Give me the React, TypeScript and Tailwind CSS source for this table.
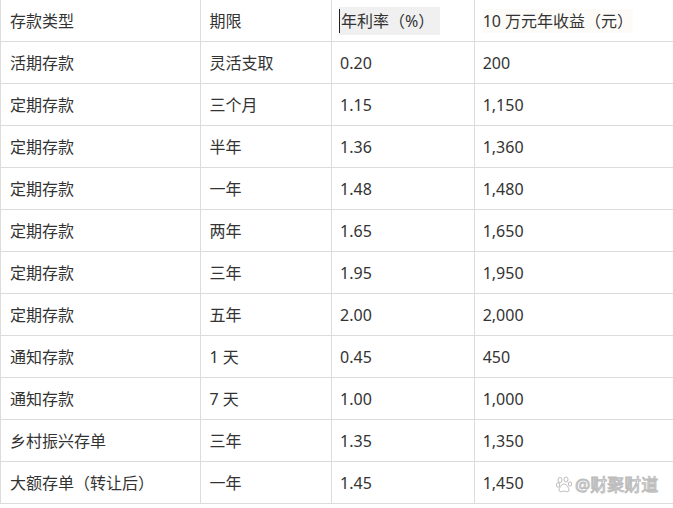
import React from 'react';

const rows: [string, string, string, string][] = [
  ['活期存款', '灵活支取', '0.20', '200'],
  ['定期存款', '三个月', '1.15', '1,150'],
  ['定期存款', '半年', '1.36', '1,360'],
  ['定期存款', '一年', '1.48', '1,480'],
  ['定期存款', '两年', '1.65', '1,650'],
  ['定期存款', '三年', '1.95', '1,950'],
  ['定期存款', '五年', '2.00', '2,000'],
  ['通知存款', '1 天', '0.45', '450'],
  ['通知存款', '7 天', '1.00', '1,000'],
  ['乡村振兴存单', '三年', '1.35', '1,350'],
  ['大额存单（转让后）', '一年', '1.45', '1,450'],
];

const cell = 'flex items-center border-r border-[#dcdcdc] h-full';

const App: React.FC = () => {
  return (
    <div
      className="relative w-[673px] h-[508px] bg-white overflow-hidden text-[16px] text-[#333]"
      style={{ fontFamily: '"Noto Sans", "Noto Sans CJK SC", sans-serif' }}
    >
      <div className="border-l border-[#dcdcdc] w-[700px]">
        <div className="flex h-[42px] border-b border-[#dcdcdc]">
          <div className={`${cell} w-[201px] pl-[9px]`}>存款类型</div>
          <div className={`${cell} w-[131px] pl-[8px]`}>期限</div>
          <div className={`${cell} w-[143px] pl-[7px]`}>
            <span className="flex items-center bg-[#f0f0f0] h-[28px] pr-[6px]">
              <span className="w-px h-[24px] bg-[#222] mr-[1px]" />
              年利率（%）
            </span>
          </div>
          <div className={`${cell} w-[226px] pl-[8px]`}>
            <span className="bg-[#fcfbf8]">10 万元年收益（元）</span>
          </div>
        </div>
        {rows.map((r, i) => (
          <div key={i} className="flex h-[42px] border-b border-[#dcdcdc]">
            <div className={`${cell} w-[201px] pl-[9px]`}>{r[0]}</div>
            <div className={`${cell} w-[131px] pl-[8px]`}>{r[1]}</div>
            <div className={`${cell} w-[143px] pl-[8px]`}>{r[2]}</div>
            <div className={`${cell} w-[226px] pl-[8px]`}>{r[3]}</div>
          </div>
        ))}
      </div>

      {/* watermark */}
      <div className="absolute left-[556px] top-[472px] flex items-center gap-[3px] text-[17px] text-white [-webkit-text-stroke:1px_#bdbdbd]">
        <svg width="16" height="17" viewBox="0 0 16 17" fill="white" stroke="#bdbdbd" strokeWidth="1">
          <ellipse cx="4" cy="4" rx="2" ry="2.6" />
          <ellipse cx="10" cy="3.5" rx="2" ry="2.6" />
          <ellipse cx="2" cy="9" rx="1.7" ry="2.2" />
          <ellipse cx="14" cy="8" rx="1.7" ry="2.2" />
          <path d="M8 8c-2.5 0-5 4-5 6s2 2 3 1.5 2.5-.6 4 0 3 .5 3-1.5S10.5 8 8 8z" />
        </svg>
        <span>@财聚财道</span>
      </div>
    </div>
  );
};

export default App;
